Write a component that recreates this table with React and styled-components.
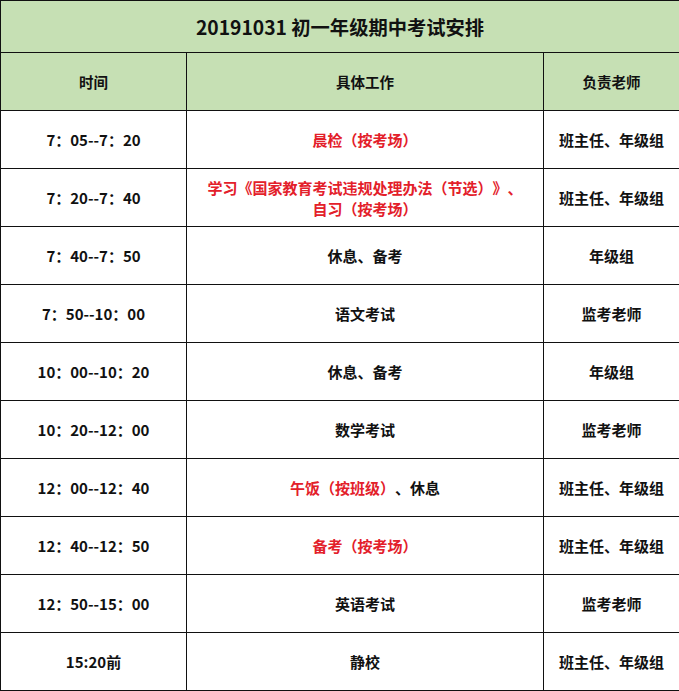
import React from "react";
import styled, { createGlobalStyle } from "styled-components";

const Global = createGlobalStyle`
  html, body { margin: 0; padding: 0; background: #fff; }
  body { font-family: "Noto Sans CJK SC", "Noto Sans", sans-serif; text-spacing-trim: space-all; }
`;

const Table = styled.table`
  width: 679px;
  border-collapse: collapse;
  table-layout: fixed;
  color: #111;
  font-weight: 700;
`;

const Col = styled.col`
  width: ${(p) => p.$w}px;
`;

const TitleCell = styled.th`
  height: 51px;
  padding: 0;
  background: #c6e0b4;
  border: 1px solid #111;
  font-size: 19.3px;
  font-weight: 700;
  text-align: center;
  vertical-align: middle;
`;

const HeadCell = styled.th`
  height: 57px;
  padding: 0;
  background: #c6e0b4;
  border: 1px solid #111;
  font-size: 14.5px;
  font-weight: 700;
  text-align: center;
  vertical-align: middle;
`;

const Cell = styled.td`
  height: 57px;
  padding: 0 4px;
  border: 1px solid #111;
  font-size: 15px;
  font-weight: 700;
  text-align: center;
  vertical-align: middle;
  line-height: 21px;
  color: #111;
  text-spacing-trim: space-all;
`;

const Red = styled.span`
  color: #e3202a;
`;

const rows = [
  { time: "7：05--7：20", work: <Red>晨检（按考场）</Red>, who: "班主任、年级组" },
  {
    time: "7：20--7：40",
    work: (
      <Red>
        学习《国家教育考试违规处理办法（节选）》、
        <br />
        自习（按考场）
      </Red>
    ),
    who: "班主任、年级组",
  },
  { time: "7：40--7：50", work: "休息、备考", who: "年级组" },
  { time: "7：50--10：00", work: "语文考试", who: "监考老师" },
  { time: "10：00--10：20", work: "休息、备考", who: "年级组" },
  { time: "10：20--12：00", work: "数学考试", who: "监考老师" },
  { time: "12：00--12：40", work: <><Red>午饭（按班级）</Red>、休息</>, who: "班主任、年级组" },
  { time: "12：40--12：50", work: <Red>备考（按考场）</Red>, who: "班主任、年级组" },
  { time: "12：50--15：00", work: "英语考试", who: "监考老师" },
  { time: "15:20前", work: "静校", who: "班主任、年级组" },
];

export default function App() {
  return (
    <>
      <Global />
      <Table>
        <colgroup>
          <Col $w={186} />
          <Col $w={357} />
          <Col $w={136} />
        </colgroup>
        <thead>
          <tr>
            <TitleCell colSpan={3}>20191031 初一年级期中考试安排</TitleCell>
          </tr>
          <tr>
            <HeadCell>时间</HeadCell>
            <HeadCell>具体工作</HeadCell>
            <HeadCell>负责老师</HeadCell>
          </tr>
        </thead>
        <tbody>
          {rows.map((r, i) => (
            <tr key={i}>
              <Cell>{r.time}</Cell>
              <Cell>{r.work}</Cell>
              <Cell>{r.who}</Cell>
            </tr>
          ))}
        </tbody>
      </Table>
    </>
  );
}
